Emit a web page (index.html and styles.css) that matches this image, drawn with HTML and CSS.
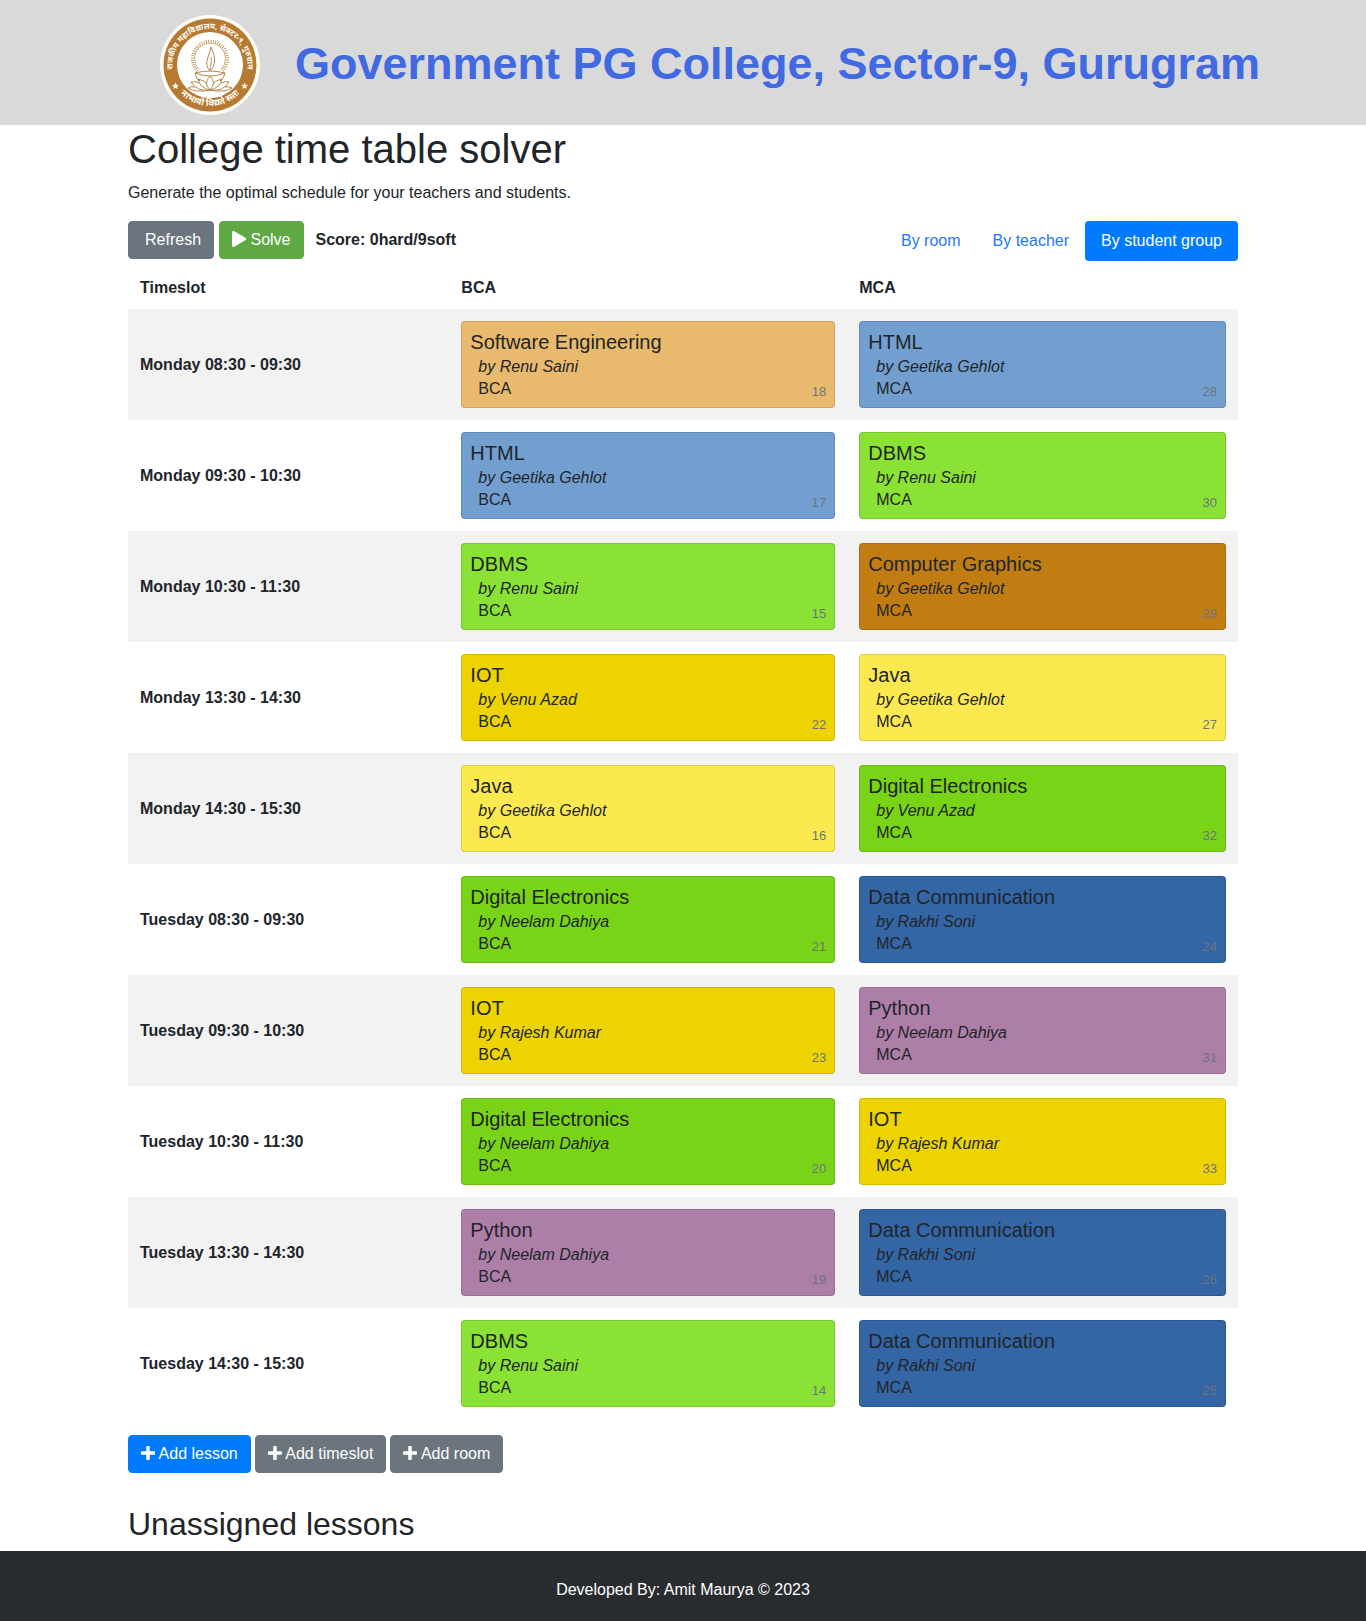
FILE: index.html
```html
<!DOCTYPE html>
<html lang="en">
<head>
<meta charset="utf-8">
<meta name="viewport" content="width=device-width, initial-scale=1">
<title>College time table solver</title>
<link rel="stylesheet" href="styles.css">
</head>
<body>
<header class="site-header">
  <svg class="logo" viewBox="0 0 100 100" role="img" aria-label="College seal">
    <defs>
      <path id="arc-top" d="M13.5 60A37.500 37.500 0 1 1 86.500 60"/>
      <path id="arc-bottom" d="M14 71A42.500 42.500 0 0 0 86 71"/>
    </defs>
    <circle cx="50" cy="50" r="50" fill="#fffdf6"/>
    <circle cx="50" cy="50" r="46.500" fill="#b77a33"/>
    <circle cx="50" cy="50" r="33" fill="#fff"/>
    <text class="seal-text"><textPath href="#arc-top" startOffset="50%" text-anchor="middle">राजकीय महाविद्यालय, सेक्टर-९, गुरुग्राम</textPath></text>
    <text class="seal-text seal-motto"><textPath href="#arc-bottom" startOffset="50%" text-anchor="middle">नाभावो विद्यते सतः</textPath></text>
    <g fill="#fffdf6">
      <path d="M15.500 67.500l1 2.300 2.500.2-1.900 1.600.6 2.400-2.200-1.300-2.200 1.300.6-2.400-1.900-1.600 2.500-.2z"/>
      <path d="M84.500 67.500l1 2.300 2.500.2-1.900 1.600.6 2.400-2.200-1.300-2.200 1.300.6-2.400-1.900-1.600 2.500-.2z"/>
    </g>
    <g fill="none" stroke="#b08a4a">
      <path d="M39 54.500A15.500 15.500 0 1 1 61 54.500" stroke-width=".7"/>
      <path d="M37.500 56A17.500 17.500 0 1 1 62.500 56" stroke-width="3" stroke-dasharray=".8 1.500"/>
      <path d="M50 56C43 48 49 43 51 32C56 43 56 50 50 56M50 56C50 51 52 49 51 42" stroke-width="1"/>
      <path d="M35 58Q50 64 65 58Q64 64 60 66M35 58Q36 64 40 66M35 58Q50 54 65 58" stroke-width="1"/>
      <path d="M50 61Q43 68 50 75Q57 68 50 61M50 75Q40 73 38 64Q44 65 47 69M50 75Q60 73 62 64Q56 65 53 69M50 75Q37 77 31 67Q35 66 39 68M50 75Q63 77 69 67Q65 66 61 68M50 75Q36 78 28 73Q31 71 35 72M50 75Q64 78 72 73Q69 71 65 72" stroke-width="1"/>
    </g>
  </svg>
  <div class="college-name">Government PG College, Sector-9, Gurugram</div>
</header>

<main class="container">
  <h1>College time table solver</h1>
  <p class="lead">Generate the optimal schedule for your teachers and students.</p>

  <div class="toolbar">
    <div class="actions">
      <button class="btn btn-secondary btn-refresh" type="button">Refresh</button>
      <button class="btn btn-success" type="button"><svg class="icon" viewBox="0 0 448 512" aria-hidden="true"><path d="M424.400 214.700L72.400 6.600C43.800-10.300 0 6.100 0 47.900V464c0 37.500 40.700 60.100 72.400 41.300l352-208c31.400-18.500 31.500-64.100 0-82.600z"/></svg> Solve</button>
      <span class="score">Score: 0hard/9soft</span>
    </div>
    <nav class="pills">
      <a class="pill" href="#room">By room</a>
      <a class="pill" href="#teacher">By teacher</a>
      <a class="pill active" href="#group" aria-current="page">By student group</a>
    </nav>
  </div>

  <table class="timetable">
    <colgroup><col class="col-slot"><col class="col-first"><col></colgroup>
    <thead><tr><th scope="col">Timeslot</th><th scope="col">BCA</th><th scope="col">MCA</th></tr></thead>
    <tbody>
      <tr><th scope="row">Monday 08:30 - 09:30</th>
        <td><div class="card tan"><div><h5>Software Engineering</h5><p><em>by Renu Saini</em></p><p>BCA</p></div><small>18</small></div></td>
        <td><div class="card blue"><div><h5>HTML</h5><p><em>by Geetika Gehlot</em></p><p>MCA</p></div><small>28</small></div></td></tr>
      <tr><th scope="row">Monday 09:30 - 10:30</th>
        <td><div class="card blue"><div><h5>HTML</h5><p><em>by Geetika Gehlot</em></p><p>BCA</p></div><small>17</small></div></td>
        <td><div class="card lime"><div><h5>DBMS</h5><p><em>by Renu Saini</em></p><p>MCA</p></div><small>30</small></div></td></tr>
      <tr><th scope="row">Monday 10:30 - 11:30</th>
        <td><div class="card lime"><div><h5>DBMS</h5><p><em>by Renu Saini</em></p><p>BCA</p></div><small>15</small></div></td>
        <td><div class="card brown"><div><h5>Computer Graphics</h5><p><em>by Geetika Gehlot</em></p><p>MCA</p></div><small>29</small></div></td></tr>
      <tr><th scope="row">Monday 13:30 - 14:30</th>
        <td><div class="card gold"><div><h5>IOT</h5><p><em>by Venu Azad</em></p><p>BCA</p></div><small>22</small></div></td>
        <td><div class="card yellow"><div><h5>Java</h5><p><em>by Geetika Gehlot</em></p><p>MCA</p></div><small>27</small></div></td></tr>
      <tr><th scope="row">Monday 14:30 - 15:30</th>
        <td><div class="card yellow"><div><h5>Java</h5><p><em>by Geetika Gehlot</em></p><p>BCA</p></div><small>16</small></div></td>
        <td><div class="card green"><div><h5>Digital Electronics</h5><p><em>by Venu Azad</em></p><p>MCA</p></div><small>32</small></div></td></tr>
      <tr><th scope="row">Tuesday 08:30 - 09:30</th>
        <td><div class="card green"><div><h5>Digital Electronics</h5><p><em>by Neelam Dahiya</em></p><p>BCA</p></div><small>21</small></div></td>
        <td><div class="card navy"><div><h5>Data Communication</h5><p><em>by Rakhi Soni</em></p><p>MCA</p></div><small>24</small></div></td></tr>
      <tr><th scope="row">Tuesday 09:30 - 10:30</th>
        <td><div class="card gold"><div><h5>IOT</h5><p><em>by Rajesh Kumar</em></p><p>BCA</p></div><small>23</small></div></td>
        <td><div class="card plum"><div><h5>Python</h5><p><em>by Neelam Dahiya</em></p><p>MCA</p></div><small>31</small></div></td></tr>
      <tr><th scope="row">Tuesday 10:30 - 11:30</th>
        <td><div class="card green"><div><h5>Digital Electronics</h5><p><em>by Neelam Dahiya</em></p><p>BCA</p></div><small>20</small></div></td>
        <td><div class="card gold"><div><h5>IOT</h5><p><em>by Rajesh Kumar</em></p><p>MCA</p></div><small>33</small></div></td></tr>
      <tr><th scope="row">Tuesday 13:30 - 14:30</th>
        <td><div class="card plum"><div><h5>Python</h5><p><em>by Neelam Dahiya</em></p><p>BCA</p></div><small>19</small></div></td>
        <td><div class="card navy"><div><h5>Data Communication</h5><p><em>by Rakhi Soni</em></p><p>MCA</p></div><small>26</small></div></td></tr>
      <tr><th scope="row">Tuesday 14:30 - 15:30</th>
        <td><div class="card lime"><div><h5>DBMS</h5><p><em>by Renu Saini</em></p><p>BCA</p></div><small>14</small></div></td>
        <td><div class="card navy"><div><h5>Data Communication</h5><p><em>by Rakhi Soni</em></p><p>MCA</p></div><small>25</small></div></td></tr>
    </tbody>
  </table>

  <div class="add-actions">
    <button class="btn btn-primary" type="button"><svg class="icon" viewBox="0 0 448 512" aria-hidden="true"><path d="M416 200H280V64c0-17.700-14.300-32-32-32h-48c-17.700 0-32 14.300-32 32v136H32c-17.700 0-32 14.300-32 32v48c0 17.700 14.300 32 32 32h136v136c0 17.700 14.300 32 32 32h48c17.700 0 32-14.300 32-32V312h136c17.700 0 32-14.300 32-32v-48c0-17.700-14.300-32-32-32z"/></svg> Add lesson</button>
    <button class="btn btn-secondary" type="button"><svg class="icon" viewBox="0 0 448 512" aria-hidden="true"><path d="M416 200H280V64c0-17.700-14.300-32-32-32h-48c-17.700 0-32 14.300-32 32v136H32c-17.700 0-32 14.300-32 32v48c0 17.700 14.300 32 32 32h136v136c0 17.700 14.300 32 32 32h48c17.700 0 32-14.300 32-32V312h136c17.700 0 32-14.300 32-32v-48c0-17.700-14.300-32-32-32z"/></svg> Add timeslot</button>
    <button class="btn btn-secondary" type="button"><svg class="icon" viewBox="0 0 448 512" aria-hidden="true"><path d="M416 200H280V64c0-17.700-14.300-32-32-32h-48c-17.700 0-32 14.300-32 32v136H32c-17.700 0-32 14.300-32 32v48c0 17.700 14.300 32 32 32h136v136c0 17.700 14.300 32 32 32h48c17.700 0 32-14.300 32-32V312h136c17.700 0 32-14.300 32-32v-48c0-17.700-14.300-32-32-32z"/></svg> Add room</button>
  </div>

  <h2>Unassigned lessons</h2>
</main>

<footer class="site-footer">Developed By: Amit Maurya © 2023</footer>
</body>
</html>
```
FILE: styles.css
```css
* { box-sizing: border-box; }

body {
  margin: 0;
  font-family: "Liberation Sans", Arial, sans-serif;
  font-size: 16px;
  line-height: 24px;
  color: #212529;
  background: #fff;
}

h1, h2, h5, p { margin: 0; font-weight: 400; }

/* Header */
.site-header {
  display: flex;
  align-items: center;
  justify-content: center;
  gap: 35px;
  padding: 15px 0 10px;
  padding-left: 54px;
  background: #d9d9d9;
}
.logo { width: 100px; height: 100px; flex: none; }
.seal-text {
  font-family: "Noto Sans", "Noto Sans Devanagari", sans-serif;
  font-size: 8px;
  font-weight: 700;
  fill: #fffdf6;
}
.seal-motto { font-size: 9px; }
.college-name {
  padding-bottom: 2px;
  font-size: 45px;
  line-height: 54px;
  font-weight: 700;
  color: #4169e1;
}

.container {
  max-width: 1140px;
  margin: 0 auto;
  padding: 0 15px 8px;
}
h1 { font-size: 40px; line-height: 48px; }
.lead { margin: 8px 0 16px; }

/* Toolbar */
.toolbar {
  display: flex;
  justify-content: space-between;
  align-items: flex-start;
}
.actions { display: flex; align-items: center; gap: 5px; }
.btn {
  padding: 6px 12px;
  border: 1px solid transparent;
  border-radius: 4px;
  font: inherit;
  color: #fff;
  cursor: pointer;
}
.btn-refresh { padding-left: 16px; }
.btn-primary { background-color: #007bff; border-color: #007bff; }
.btn-secondary { background-color: #6c757d; border-color: #6c757d; }
.btn-success { background-color: #5fa945; border-color: #5fa945; }
.icon {
  width: 14px;
  height: 16px;
  vertical-align: -2px;
  fill: currentColor;
}
.score { margin-left: 7px; font-weight: 700; }
.pills { display: flex; }
.pill {
  padding: 8px 16px;
  border-radius: 4px;
  color: #1f78f7;
  text-decoration: none;
}
.pill.active { background: #007bff; color: #fff; }

/* Timetable */
.timetable {
  width: 100%;
  table-layout: fixed;
  border-collapse: collapse;
  margin-bottom: 16px;
}
.col-slot { width: 28.95%; }
.col-first { width: 35.85%; }
.timetable th, .timetable td { padding: 12px; text-align: left; }
.timetable thead th { padding-top: 15px; padding-bottom: 9px; }
.timetable tbody th { vertical-align: middle; }
.timetable tbody tr:nth-child(odd) { background: #f2f2f2; }

.card {
  display: flex;
  justify-content: space-between;
  align-items: flex-end;
  padding: 8px 8px 7px;
  border: 1px solid rgba(0, 0, 0, 0.125);
  border-radius: 4px;
}
.card h5 { font-size: 20px; line-height: 24px; margin-bottom: 2px; }
.card p { line-height: 22px; margin-left: 8px; }
.card small { font-size: 13px; line-height: 16px; color: #6c757d; }

.tan { background-color: #e9b96e; }
.blue { background-color: #729fcf; }
.lime { background-color: #8ae234; }
.brown { background-color: #c17d11; }
.gold { background-color: #edd400; }
.yellow { background-color: #fce94f; }
.green { background-color: #79d317; }
.navy { background-color: #3465a4; }
.plum { background-color: #ad7fa8; }

.add-actions { display: flex; gap: 4px; margin-bottom: 32px; }
h2 { font-size: 32px; line-height: 38px; }

.site-footer {
  padding: 27px 15px 19px;
  text-align: center;
  color: #fff;
  background: #282c2f;
}
```
